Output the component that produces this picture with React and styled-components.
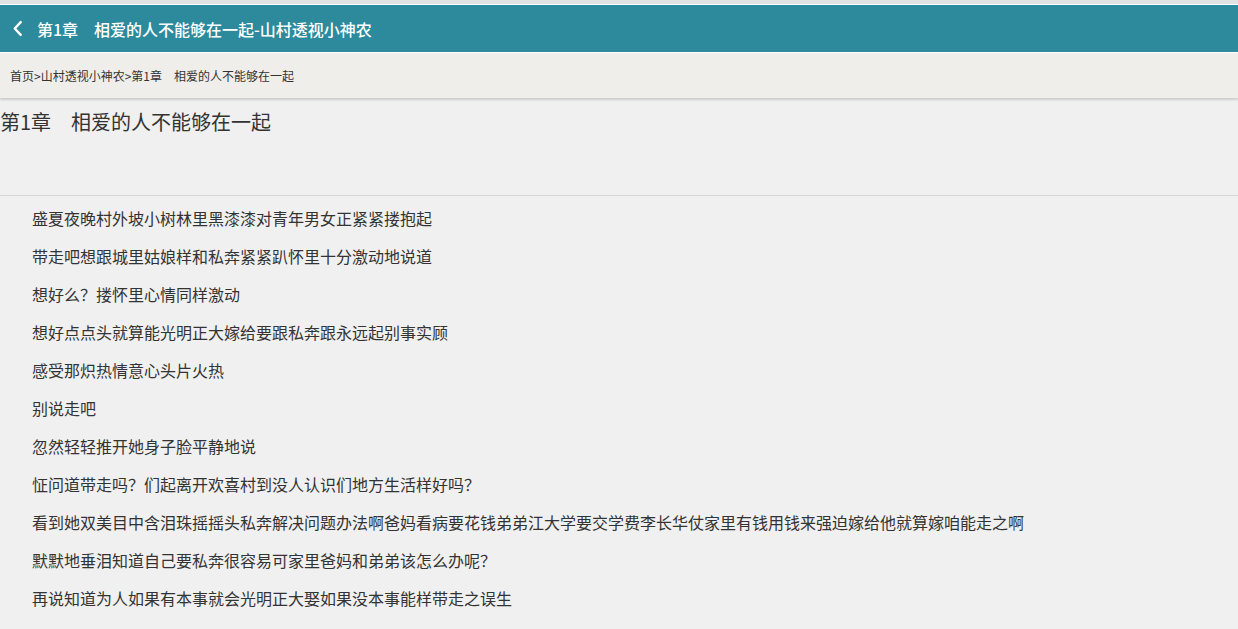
import React from "react";
import styled, { createGlobalStyle } from "styled-components";

const GlobalStyle = createGlobalStyle`
  html, body {
    margin: 0;
    padding: 0;
    background: #f0f0f0;
    font-family: "Noto Sans CJK SC", "Liberation Sans", sans-serif;
    color: #333;
  }
`;

const lines = [
  "盛夏夜晚村外坡小树林里黑漆漆对青年男女正紧紧搂抱起",
  "带走吧想跟城里姑娘样和私奔紧紧趴怀里十分激动地说道",
  "想好么？搂怀里心情同样激动",
  "想好点点头就算能光明正大嫁给要跟私奔跟永远起别事实顾",
  "感受那炽热情意心头片火热",
  "别说走吧",
  "忽然轻轻推开她身子脸平静地说",
  "怔问道带走吗？们起离开欢喜村到没人认识们地方生活样好吗？",
  "看到她双美目中含泪珠摇摇头私奔解决问题办法啊爸妈看病要花钱弟弟江大学要交学费李长华仗家里有钱用钱来强迫嫁给他就算嫁咱能走之啊",
  "默默地垂泪知道自己要私奔很容易可家里爸妈和弟弟该怎么办呢？",
  "再说知道为人如果有本事就会光明正大娶如果没本事能样带走之误生",
];

const App = () => {
  return (
    <Page>
      <GlobalStyle />
      <Header>
        <Back viewBox="0 0 12 18" aria-hidden="true">
          <path d="M9.5 2 L3 9 L9.5 16" fill="none" stroke="#fff" strokeWidth="2.6" strokeLinecap="round" strokeLinejoin="round" />
        </Back>
        <HeaderTitle>第1章　相爱的人不能够在一起-山村透视小神农</HeaderTitle>
      </Header>
      <Crumbs>首页&gt;山村透视小神农&gt;第1章　相爱的人不能够在一起</Crumbs>
      <ChapterTitle>第1章　相爱的人不能够在一起</ChapterTitle>
      <Rule />
      <Content>
        {lines.map((t, i) => (
          <Para key={i}>{t}</Para>
        ))}
      </Content>
    </Page>
  );
};

export default App;

const Page = styled.div`
  border-top: 4px solid #e2e2e2;
  min-height: 625px;
`;

const Header = styled.div`
  display: flex;
  align-items: center;
  height: 49px;
  padding-left: 12px;
  background: #2c8a9c;
  border-top: 1px solid #fff;
  border-bottom: 1px solid #fff;
  box-sizing: border-box;
`;

const Back = styled.svg`
  width: 11px;
  height: 17px;
  margin-right: 14px;
`;

const HeaderTitle = styled.span`
  color: #fff;
  font-size: 16px;
  font-weight: 500;
`;

const Crumbs = styled.div`
  display: flex;
  align-items: center;
  height: 45px;
  padding-left: 10px;
  background: #efeeea;
  font-size: 12px;
  color: #333;
  box-shadow: 0 2px 2px rgba(0, 0, 0, 0.15);
`;

const ChapterTitle = styled.h1`
  margin: 0;
  padding-top: 10px;
  height: 87px;
  font-size: 20px;
  font-weight: 400;
  line-height: 28px;
  color: #333;
`;

const Rule = styled.div`
  height: 1px;
  background: #d8d8d8;
`;

const Content = styled.div`
  padding: 9px 0 0 32px;
`;

const Para = styled.p`
  margin: 0;
  height: 38px;
  line-height: 26px;
  font-size: 16px;
  color: #333;
`;
